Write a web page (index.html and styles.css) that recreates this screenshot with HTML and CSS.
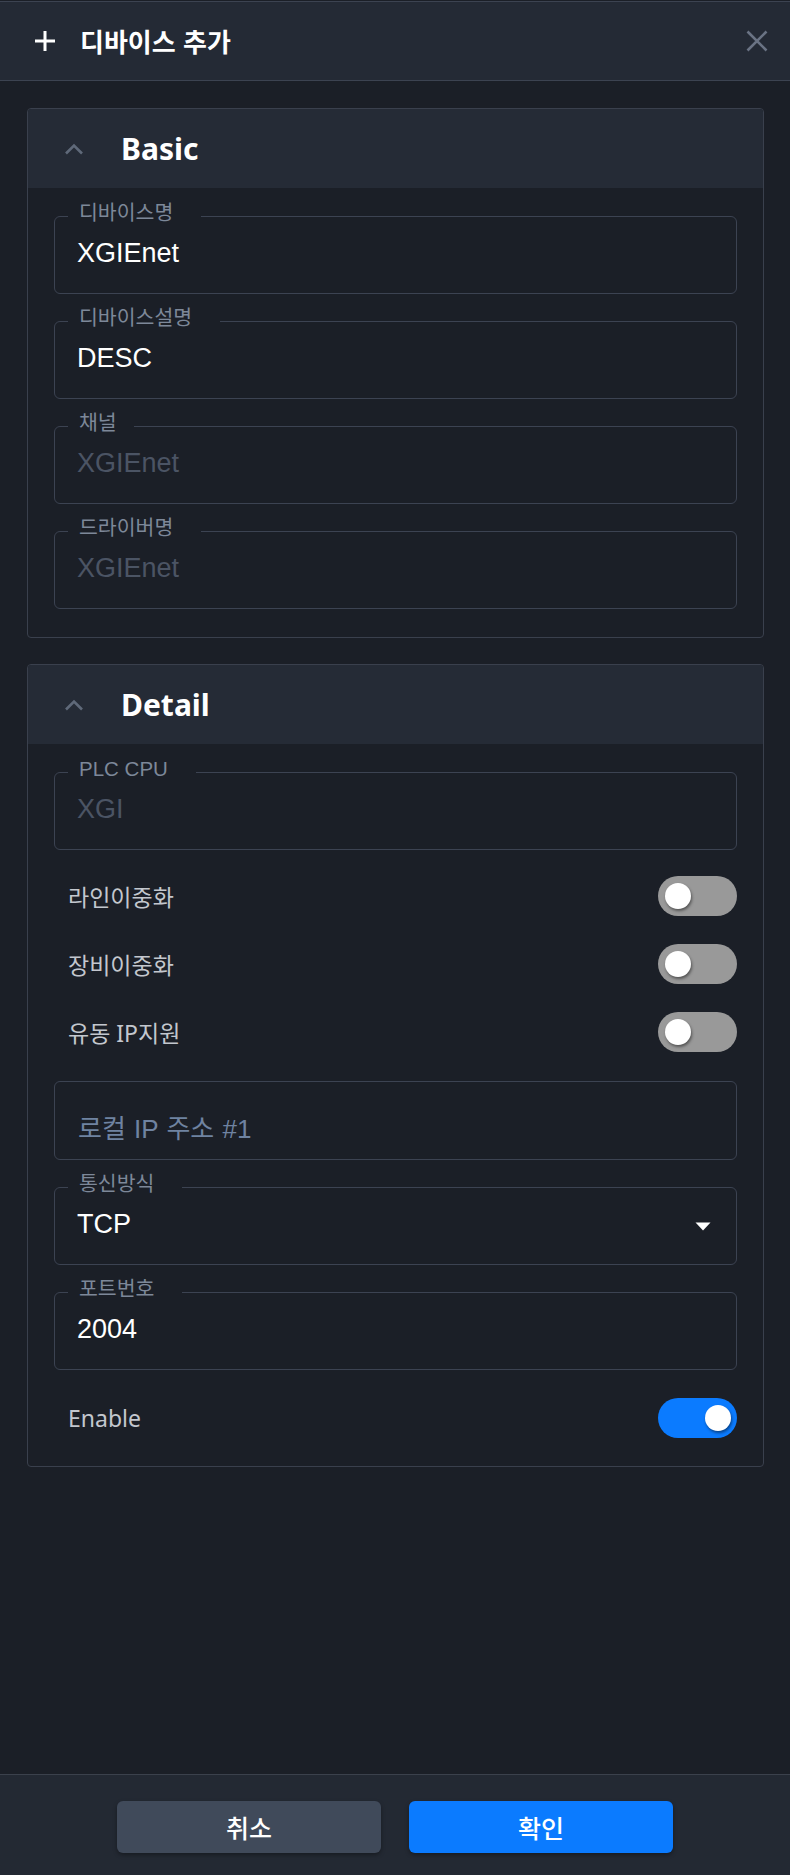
FILE: index.html
```html
<!DOCTYPE html>
<html lang="ko">
<head>
<meta charset="utf-8">
<title>디바이스 추가</title>
<link rel="stylesheet" href="styles.css">
</head>
<body>
<div class="app">
  <header class="topbar">
    <svg class="ic-plus" width="22" height="22" viewBox="0 0 22 22"><path d="M11 1v20M1 11h20" stroke="#fff" stroke-width="3" fill="none"/></svg>
    <h1 class="topbar-title">디바이스 추가</h1>
    <button class="close" aria-label="close"><svg width="22" height="22" viewBox="0 0 22 22"><path d="M1.5 1.5l19 19M20.5 1.5l-19 19" stroke="#6a7384" stroke-width="2.6" fill="none"/></svg></button>
  </header>

  <main class="content">
    <section class="panel">
      <div class="panel-head">
        <svg class="chev" width="20" height="12" viewBox="0 0 20 12"><path d="M2 10.5L10 2.5l8 8" stroke="#5f6979" stroke-width="2.6" fill="none"/></svg>
        <h2 class="panel-title">Basic</h2>
      </div>
      <div class="panel-body">
        <fieldset class="field"><legend><span>디바이스명</span></legend><div class="value">XGIEnet</div></fieldset>
        <fieldset class="field"><legend><span>디바이스설명</span></legend><div class="value">DESC</div></fieldset>
        <fieldset class="field"><legend class="legend-short"><span>채널</span></legend><div class="value is-disabled">XGIEnet</div></fieldset>
        <fieldset class="field"><legend><span>드라이버명</span></legend><div class="value is-disabled">XGIEnet</div></fieldset>
      </div>
    </section>

    <section class="panel">
      <div class="panel-head">
        <svg class="chev" width="20" height="12" viewBox="0 0 20 12"><path d="M2 10.5L10 2.5l8 8" stroke="#5f6979" stroke-width="2.6" fill="none"/></svg>
        <h2 class="panel-title">Detail</h2>
      </div>
      <div class="panel-body">
        <fieldset class="field"><legend><span>PLC CPU</span></legend><div class="value is-disabled">XGI</div></fieldset>
        <div class="switch-list">
          <div class="switch-row"><span class="switch-label">라인이중화</span><span class="switch"></span></div>
          <div class="switch-row"><span class="switch-label">장비이중화</span><span class="switch"></span></div>
          <div class="switch-row"><span class="switch-label">유동 IP지원</span><span class="switch"></span></div>
        </div>
        <div class="plain-input"><span class="placeholder">로컬 IP 주소 #1</span></div>
        <fieldset class="field"><legend><span>통신방식</span></legend><div class="value value-select">TCP<svg class="caret" width="16" height="9" viewBox="0 0 16 9"><path d="M0.5 0.5h15L8 8.5z" fill="#fff"/></svg></div></fieldset>
        <fieldset class="field"><legend><span>포트번호</span></legend><div class="value">2004</div></fieldset>
        <div class="switch-row switch-row-last"><span class="switch-label">Enable</span><span class="switch is-on"></span></div>
      </div>
    </section>
  </main>

  <footer class="actions">
    <button class="btn btn-cancel">취소</button>
    <button class="btn btn-ok">확인</button>
  </footer>
</div>
</body>
</html>
```

FILE: styles.css
```css
* { box-sizing: border-box; }

html, body {
  margin: 0;
  padding: 0;
  background: #1b1f27;
}

body {
  font-family: "Noto Sans", "Noto Sans CJK KR", sans-serif;
  color: #fff;
}

.app {
  height: 1875px;
  display: flex;
  flex-direction: column;
  padding-top: 1px;
}

/* top bar */
.topbar {
  height: 80px;
  flex: none;
  display: flex;
  align-items: center;
  padding: 0 22px 0 34px;
  background: #242a35;
  border-top: 1px solid #3c4351;
  border-bottom: 1px solid #3c4351;
}

.ic-plus { display: block; flex: none; }

.topbar-title {
  margin: 0 0 0 24px;
  font-family: "Noto Sans CJK KR", sans-serif;
  font-size: 26px;
  font-weight: 700;
  line-height: 30px;
  color: #fff;
  flex: 1;
}

.close {
  background: none;
  border: 0;
  padding: 0;
  width: 22px;
  height: 22px;
  display: block;
}
.close svg { display: block; }

/* content */
.content {
  flex: 1;
  padding: 27px 26px 0 27px;
  display: flex;
  flex-direction: column;
  gap: 26px;
}

.panel {
  border: 1px solid #3a404d;
  border-radius: 4px;
  overflow: hidden;
}

.panel-head {
  height: 79px;
  display: flex;
  align-items: center;
  padding-left: 36px;
  background: #252b36;
}

.chev { display: block; flex: none; }

.panel-title {
  margin: 0 0 0 37px;
  font-family: "Noto Sans", sans-serif;
  font-size: 30px;
  font-weight: 700;
  line-height: 40px;
  color: #fff;
}

.panel-body {
  padding: 17px 26px 28px 26px;
  display: flex;
  flex-direction: column;
}

/* outlined field */
.field {
  margin: 16px 0 0;
  padding: 0 22px 14px;
  border: 1px solid #3c4352;
  border-radius: 6px;
  min-width: 0;
}
.panel-body > .field:first-child { margin-top: 0; }

.field legend {
  margin-left: -9px;
  padding: 0 28px 0 11px;
  font-family: "Liberation Sans", "Noto Sans CJK KR", sans-serif;
  font-size: 20.5px;
  line-height: 22px;
  color: #7d8899;
}
.field legend.legend-short { padding-right: 17px; }

.field legend span {
  position: relative;
  top: -3px;
}

.value {
  height: 52px;
  line-height: 52px;
  font-family: "Liberation Sans", "Noto Sans CJK KR", sans-serif;
  font-size: 27px;
  color: #fff;
  white-space: nowrap;
}

.value.is-disabled { color: #4b5464; }

.value-select {
  display: flex;
  align-items: center;
  justify-content: space-between;
  padding-right: 3px;
}
.caret { display: block; margin-top: 4px; }

/* plain input without label */
.plain-input {
  height: 79px;
  margin-top: 29px;
  border: 1px solid #3c4352;
  border-radius: 6px;
  display: flex;
  align-items: center;
  padding: 12px 23px 0;
}

.placeholder {
  font-family: "Liberation Sans", "Noto Sans CJK KR", sans-serif;
  font-size: 26px;
  word-spacing: 1px;
  color: #6f83a1;
}

/* switches */
.switch-list {
  margin-top: 26px;
  display: flex;
  flex-direction: column;
  gap: 28px;
}

.switch-row {
  height: 40px;
  display: flex;
  align-items: center;
  justify-content: space-between;
  padding-left: 14px;
}

.switch-row-last { margin-top: 28px; }

.switch-label {
  font-family: "Noto Sans", "Noto Sans CJK KR", sans-serif;
  font-size: 23px;
  color: #c3c7ce;
}

.switch {
  width: 79px;
  height: 40px;
  border-radius: 20px;
  background: #999999;
  position: relative;
  flex: none;
}

.switch::after {
  content: "";
  position: absolute;
  left: 7px;
  top: 7px;
  width: 26px;
  height: 26px;
  border-radius: 50%;
  background: #fff;
  box-shadow: 1px 2px 3px rgba(0, 0, 0, 0.45);
}

.switch.is-on { background: #0b7bff; }
.switch.is-on::after { left: auto; right: 6px; }

/* footer */
.actions {
  height: 101px;
  flex: none;
  background: #232933;
  border-top: 1px solid #3b414c;
  display: flex;
  justify-content: center;
  align-items: flex-start;
  gap: 28px;
  padding-top: 26px;
}

.btn {
  width: 264px;
  height: 52px;
  border: 0;
  border-radius: 6px;
  font-family: "Noto Sans CJK KR", sans-serif;
  font-size: 25px;
  font-weight: 500;
  color: #fff;
  box-shadow: 0 2px 4px rgba(0, 0, 0, 0.35);
}

.btn-cancel { background: #404a5a; }
.btn-ok { background: #0b7bff; }
```
